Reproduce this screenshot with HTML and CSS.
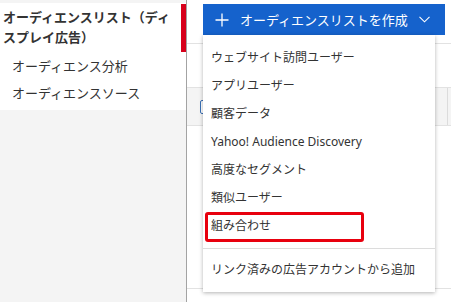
FILE: index.html
```html
<!DOCTYPE html>
<html lang="ja">

<head>
    <meta charset="UTF-8">
    <meta name="viewport" content="width=device-width, initial-scale=1.0">
    <title>オーディエンスリスト</title>
    <link rel="stylesheet" href="styles.css">
</head>

<body>
    <div class="sidebar">
        <nav class="side-nav">
            <a class="side-item active">オーディエンスリスト（ディスプレイ広告）</a>
            <a class="side-item">オーディエンス分析</a>
            <a class="side-item">オーディエンスソース</a>
        </nav>
    </div>

    <div class="main">
        <div class="toolbar">
            <button type="button" class="create-btn">
                <svg class="plus" width="14" height="14" viewBox="0 0 14 14">
                    <path d="M7 0.5V13.5M0.5 7H13.5" stroke="#fff" stroke-width="1.3" fill="none"/>
                </svg>
                <span>オーディエンスリストを作成</span>
                <svg class="chev" width="11" height="7" viewBox="0 0 11 7">
                    <path d="M0.5 0.8L5.5 5.8L10.5 0.8" stroke="#fff" stroke-width="1.1" fill="none"/>
                </svg>
            </button>
        </div>
        <div class="filter-row"></div>
        <div class="table-head">
            <span class="checkbox"></span>
            <span class="col-line"></span>
        </div>
        <div class="table-row"></div>

        <div class="dropdown">
            <div class="menu-item">ウェブサイト訪問ユーザー</div>
            <div class="menu-item">アプリユーザー</div>
            <div class="menu-item">顧客データ</div>
            <div class="menu-item">Yahoo! Audience Discovery</div>
            <div class="menu-item">高度なセグメント</div>
            <div class="menu-item">類似ユーザー</div>
            <div class="menu-item">組み合わせ</div>
            <div class="menu-sep"></div>
            <div class="menu-item">リンク済みの広告アカウントから追加</div>
            <div class="highlight"></div>
        </div>
    </div>
</body>

</html>
```

FILE: styles.css
```css
body {
    font-family: "Noto Sans", "Noto Sans CJK JP", sans-serif;
    margin: 0;
    height: 302px;
    display: flex;
    background-color: #f4f4f4;
    color: #333;
    overflow: hidden;
}

/* left navigation */
.sidebar {
    width: 186px;
    border-right: 1px solid #a3a3a3;
    padding-top: 3px;
}

.side-nav {
    background-color: #fff;
    padding: 1px 0 3px;
    display: flex;
    flex-direction: column;
}

.side-item {
    display: block;
    font-size: 13px;
    line-height: 27px;
    height: 27px;
    padding-left: 12px;
}

.side-item.active {
    font-weight: bold;
    line-height: 20px;
    height: auto;
    padding: 3px 8px 5px 3px;
    border-right: 5px solid #d7001b;
    margin-bottom: 1px;
}

/* main area */
.main {
    flex: 1;
    position: relative;
    background-color: #fff;
}

.toolbar {
    height: 44px;
    padding: 4px 0 0 16px;
    border-bottom: 1px solid #e2e2e2;
    box-sizing: border-box;
}

.create-btn {
    display: flex;
    align-items: center;
    height: 31px;
    width: 242px;
    padding: 0 0 0 12px;
    border: none;
    border-radius: 0;
    background-color: #1562cc;
    color: #fff;
    font-family: inherit;
    font-size: 13px;
    cursor: pointer;
}

.create-btn .plus {
    margin-right: 11px;
}

.create-btn .chev {
    margin-left: 11px;
}

.filter-row {
    height: 43px;
    border-bottom: 1px solid #e2e2e2;
}

.table-head {
    height: 37px;
    background-color: #f4f4f4;
    border-bottom: 1px solid #e2e2e2;
    display: flex;
    align-items: center;
    justify-content: space-between;
    padding-left: 13px;
}

.checkbox {
    width: 12px;
    height: 12px;
    border: 1px solid #3a6fb5;
    border-radius: 2px;
    background-color: #fff;
}

.col-line {
    width: 1px;
    height: 100%;
    background-color: #dcdcdc;
    margin-right: 3px;
}

.table-row {
    height: 162px;
    border-bottom: 1px solid #e2e2e2;
}

/* dropdown menu */
.dropdown {
    position: absolute;
    top: 35px;
    left: 16px;
    width: 232px;
    padding: 9px 0 8px;
    background-color: #fff;
    box-shadow: 0 1px 4px rgba(0, 0, 0, 0.3);
}

.menu-item {
    font-size: 12px;
    line-height: 28px;
    height: 28px;
    padding-left: 8px;
    white-space: nowrap;
}

.menu-sep {
    height: 1px;
    background-color: #dcdcdc;
    margin: 8px 0 7px;
}

.highlight {
    position: absolute;
    left: 2px;
    top: 177px;
    width: 159px;
    height: 30px;
    border: 3px solid #e8000e;
    border-radius: 3px;
    box-sizing: border-box;
}
```
